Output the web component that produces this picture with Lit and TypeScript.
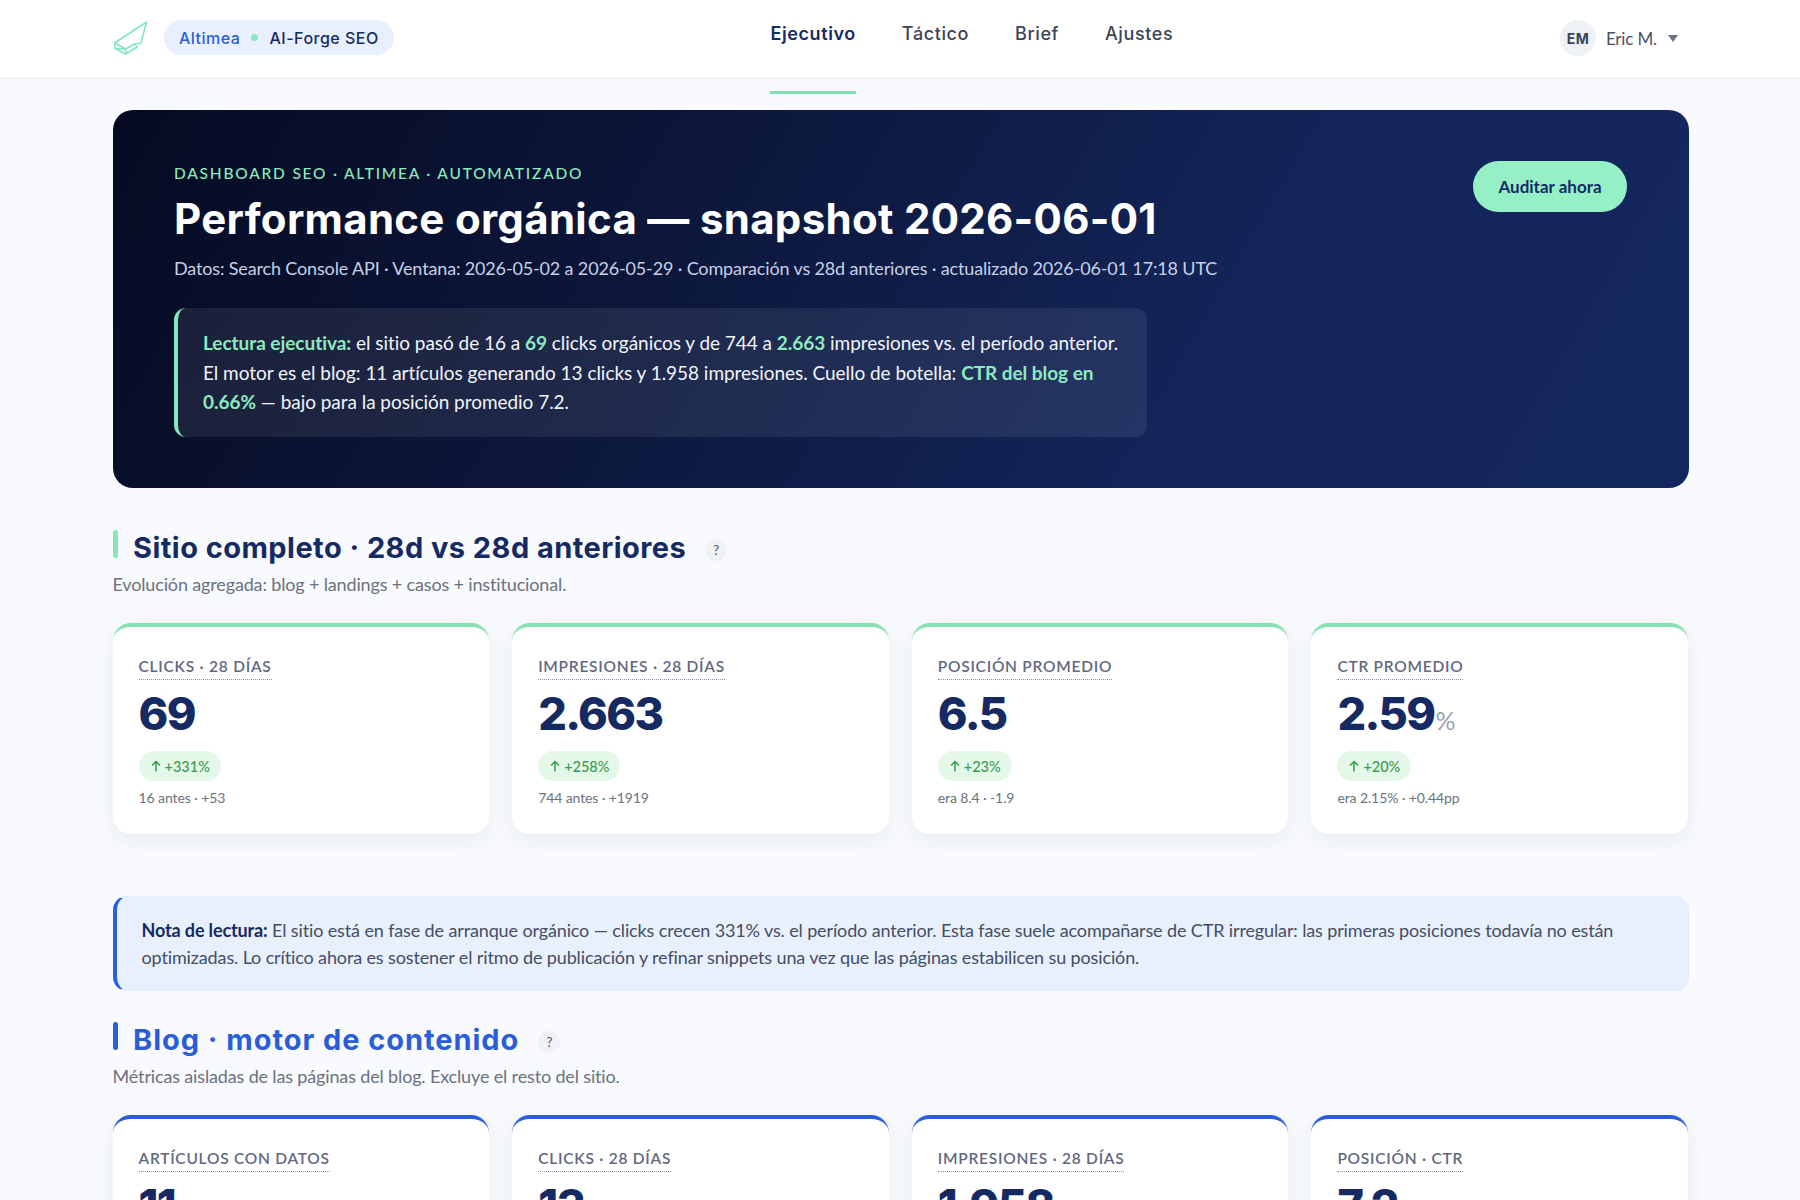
import { LitElement, html, css, nothing } from "lit";
import { customElement } from "lit/decorators.js";

interface Kpi {
  label: string;
  value: string;
  unit?: string;
  delta?: string;
  note?: string;
}

const SITE: Kpi[] = [
  { label: "CLICKS · 28 DÍAS", value: "69", delta: "+331%", note: "16 antes · +53" },
  { label: "IMPRESIONES · 28 DÍAS", value: "2.663", delta: "+258%", note: "744 antes · +1919" },
  { label: "POSICIÓN PROMEDIO", value: "6.5", delta: "+23%", note: "era 8.4 · -1.9" },
  { label: "CTR PROMEDIO", value: "2.59", unit: "%", delta: "+20%", note: "era 2.15% · +0.44pp" },
];

const BLOG: Kpi[] = [
  { label: "ARTÍCULOS CON DATOS", value: "11" },
  { label: "CLICKS · 28 DÍAS", value: "13" },
  { label: "IMPRESIONES · 28 DÍAS", value: "1.958" },
  { label: "POSICIÓN · CTR", value: "7.2" },
];

const NAV = ["Ejecutivo", "Táctico", "Brief", "Ajustes"];

@customElement("app-root")
export class AppRoot extends LitElement {
  static styles = css`
    :host {
      display: block;
      height: 100vh;
      overflow: hidden;
      background: #f8fafd;
      font-family: "Lato", sans-serif;
      color: #152a63;
    }

    /* top bar */
    .topbar {
      background: #fff;
      border-bottom: 1px solid #e6e8ec;
      height: 78px;
      box-sizing: content-box;
      padding: 0 112px 0 113px;
      display: flex;
      align-items: center;
      justify-content: space-between;
    }
    .brand {
      display: flex;
      align-items: center;
      gap: 16px;
      margin-top: -3px;
    }
    .logo {
      width: 35px;
      height: 34px;
      display: block;
    }
    .tag {
      display: flex;
      align-items: center;
      height: 35px;
      padding: 0 15px;
      border-radius: 18px;
      background: #e9f0fd;
      font-family: "Inter", sans-serif;
      font-size: 16px;
      font-weight: 500;
      letter-spacing: 0.5px;
      color: #152a63;
    }
    .tag b {
      font-weight: 500;
      color: #2a5ed8;
    }
    .tag i {
      width: 7px;
      height: 7px;
      margin: 0 11px;
      border-radius: 50%;
      background: #8be8bf;
    }
    .nav {
      display: flex;
      gap: 46px;
      margin-top: -11px;
      font-family: "Inter", sans-serif;
      font-size: 18px;
      font-weight: 500;
      letter-spacing: 0.6px;
      color: #3c4358;
    }
    .nav a {
      position: relative;
    }
    .nav a.on {
      color: #152a63;
      font-weight: 600;
    }
    .nav a.on::after {
      content: "";
      position: absolute;
      left: 0;
      right: 0;
      top: 68px;
      height: 3px;
      background: #7fe0b2;
    }
    .user {
      display: flex;
      align-items: center;
      margin-top: -2px;
      padding: 0 10px;
      font-size: 17px;
      letter-spacing: -0.15px;
      color: #4a5166;
    }
    .avatar {
      width: 36px;
      height: 36px;
      margin-right: 10px;
      border-radius: 50%;
      background: #eef1f5;
      display: flex;
      align-items: center;
      justify-content: center;
      font-family: "Inter", sans-serif;
      font-size: 14px;
      font-weight: 700;
      letter-spacing: 0.3px;
      color: #3c4358;
    }
    .caret {
      width: 0;
      height: 0;
      margin-left: 11px;
      border-left: 5px solid transparent;
      border-right: 5px solid transparent;
      border-top: 7px solid #6b7389;
    }

    main {
      padding: 31px 112px 0 112.5px;
    }

    /* hero */
    .hero {
      height: 378px;
      box-sizing: border-box;
      margin-right: -1px;
      padding: 51px 62px 51px 61.5px;
      border-radius: 20px;
      background: linear-gradient(120deg, #060b22 0%, #0c173b 36%, #13255a 70%, #14275f 100%);
      display: flex;
      justify-content: space-between;
      align-items: flex-start;
    }
    .eyebrow {
      margin-top: 2px;
      font-size: 15.5px;
      line-height: 20px;
      font-weight: 500;
      letter-spacing: 1.78px;
      color: #8ceabf;
    }
    h1 {
      margin: 10px 0 0;
      font-family: "Inter", sans-serif;
      font-size: 42px;
      line-height: 52px;
      font-weight: 700;
      letter-spacing: 0.3px;
      color: #fff;
      white-space: nowrap;
    }
    .meta {
      margin-top: 10px;
      font-size: 18px;
      line-height: 26px;
      letter-spacing: -0.15px;
      color: #c7d0e6;
      white-space: nowrap;
    }
    .insight {
      width: 973px;
      box-sizing: border-box;
      margin-top: 27px;
      padding: 20px 22px 20.5px 25px;
      border-left: 4px solid #86e6b9;
      border-radius: 12px;
      background: rgba(255, 255, 255, 0.08);
      font-size: 19px;
      line-height: 29.5px;
      letter-spacing: -0.04px;
      color: #f1f4fa;
    }
    .insight em {
      font-style: normal;
      font-weight: 700;
      color: #8ceabf;
    }
    .audit {
      height: 51px;
      width: 154px;
      border: 0;
      border-radius: 26px;
      background: #96f0c6;
      font-family: "Lato", sans-serif;
      font-size: 17px;
      font-weight: 700;
      color: #152a63;
    }

    /* sections */
    .head {
      margin-top: 42px;
    }
    .head.blog {
      margin-top: 31px;
    }
    .title {
      display: flex;
      align-items: flex-start;
    }
    .bar {
      width: 5px;
      height: 28px;
      margin-right: 15.5px;
      border-radius: 3px;
      background: #86e6b9;
    }
    .blog .bar {
      background: #2a5ed8;
    }
    h2 {
      margin: 0;
      font-family: "Inter", sans-serif;
      font-size: 29px;
      line-height: 36px;
      font-weight: 700;
      letter-spacing: 0.45px;
      color: #152a63;
    }
    .blog h2 {
      letter-spacing: 0.95px;
      color: #2a5ed8;
    }
    .hint {
      width: 22px;
      height: 22px;
      margin: 9px 0 0 19px;
      border-radius: 50%;
      background: #f0f2f5;
      display: flex;
      align-items: center;
      justify-content: center;
      font-size: 13px;
      color: #4a5166;
    }
    .sub {
      margin-top: 5px;
      font-size: 18px;
      line-height: 26px;
      letter-spacing: -0.15px;
      color: #6b7280;
    }
    .grid {
      display: grid;
      grid-template-columns: repeat(4, 1fr);
      gap: 23px;
      margin-top: 26px;
    }
    .card {
      box-sizing: border-box;
      min-height: 211px;
      padding: 29px 26px 17px;
      border-top: 4px solid #86e0b0;
      border-radius: 18px;
      background: #fff;
      box-shadow: 0 6px 22px rgba(25, 45, 95, 0.07);
    }
    .blog-cards .card {
      border-top-color: #2a5ed8;
    }
    .label {
      display: inline-block;
      padding-bottom: 3px;
      border-bottom: 1px dotted #8d94a5;
      font-size: 15.5px;
      line-height: 20px;
      font-weight: 600;
      letter-spacing: 0.75px;
      color: #5f6880;
    }
    .value {
      height: 50px;
      margin-top: 9px;
      font-family: "Inter", sans-serif;
      font-size: 45px;
      line-height: 50px;
      font-weight: 800;
      letter-spacing: -1.6px;
      color: #152a63;
    }
    .value small {
      margin-left: 1px;
      font-family: "Lato", sans-serif;
      font-size: 25px;
      line-height: 0;
      font-weight: 400;
      letter-spacing: 0;
      color: #9aa1b2;
    }
    .pill {
      display: flex;
      align-items: center;
      gap: 4px;
      width: max-content;
      height: 30px;
      margin-top: 12px;
      padding: 0 11px 0 12px;
      border-radius: 15px;
      background: #e3f8e8;
      font-size: 14.5px;
      font-weight: 500;
      color: #3a9a50;
    }
    .pill svg {
      width: 10px;
      height: 12px;
      display: block;
    }
    .was {
      margin-top: 7px;
      font-size: 14px;
      line-height: 20px;
      letter-spacing: -0.1px;
      color: #6b7280;
    }

    .note {
      box-sizing: border-box;
      height: 95px;
      margin-top: 62px;
      margin-right: -1px;
      padding: 20px 25px;
      border: 1px solid #e4ebf9;
      border-left: 4px solid #2a62dd;
      border-radius: 14px;
      background: #e9f0fd;
      font-size: 18px;
      line-height: 27px;
      letter-spacing: -0.13px;
      color: #444e64;
    }
    .note strong {
      font-weight: 700;
      color: #152a63;
    }
  `;

  private kpi(k: Kpi) {
    return html`
      <div class="card">
        <div class="label">${k.label}</div>
        <div class="value">${k.value}${k.unit ? html`<small>${k.unit}</small>` : nothing}</div>
        ${k.delta
          ? html`<div class="pill">
              <svg viewBox="0 0 10 12" fill="none" stroke="currentColor" stroke-width="1.5">
                <path d="M5 11.5V1.5M1 5.5l4-4 4 4" />
              </svg>
              ${k.delta}
            </div>`
          : nothing}
        ${k.note ? html`<div class="was">${k.note}</div>` : nothing}
      </div>
    `;
  }

  render() {
    return html`
      <header class="topbar">
        <div class="brand">
          <svg class="logo" viewBox="0 0 35 34" fill="none" stroke="#7fe6bd" stroke-width="1.5" stroke-linejoin="round">
            <path d="M33.5 1 1.5 22 2 27.5 12.7 33 24.3 26 21.3 23 28 22.3Z" />
            <path d="M1.5 22 12.7 28 21.3 23M2 27.5 12.7 28 12.7 33" />
          </svg>
          <div class="tag"><b>Altimea</b><i></i>AI-Forge SEO</div>
        </div>
        <nav class="nav">
          ${NAV.map((n, i) => html`<a class=${i === 0 ? "on" : ""}>${n}</a>`)}
        </nav>
        <div class="user">
          <div class="avatar">EM</div>
          Eric M.
          <span class="caret"></span>
        </div>
      </header>

      <main>
        <section class="hero">
          <div>
            <div class="eyebrow">DASHBOARD SEO · ALTIMEA · AUTOMATIZADO</div>
            <h1>Performance orgánica — snapshot 2026-06-01</h1>
            <div class="meta">
              Datos: Search Console API · Ventana: 2026-05-02 a 2026-05-29 · Comparación vs 28d anteriores · actualizado 2026-06-01 17:18 UTC
            </div>
            <div class="insight">
              <em>Lectura ejecutiva:</em> el sitio pasó de 16 a <em>69</em> clicks orgánicos y de 744 a
              <em>2.663</em> impresiones vs. el período anterior. El motor es el blog: 11 artículos generando 13
              clicks y 1.958 impresiones. Cuello de botella: <em>CTR del blog en 0.66%</em> — bajo para la posición
              promedio 7.2.
            </div>
          </div>
          <button class="audit">Auditar ahora</button>
        </section>

        <div class="head">
          <div class="title">
            <span class="bar"></span>
            <h2>Sitio completo · 28d vs 28d anteriores</h2>
            <span class="hint">?</span>
          </div>
          <div class="sub">Evolución agregada: blog + landings + casos + institucional.</div>
        </div>
        <div class="grid">${SITE.map((k) => this.kpi(k))}</div>

        <div class="note">
          <strong>Nota de lectura:</strong> El sitio está en fase de arranque orgánico — clicks crecen 331% vs. el
          período anterior. Esta fase suele acompañarse de CTR irregular: las primeras posiciones todavía no están
          optimizadas. Lo crítico ahora es sostener el ritmo de publicación y refinar snippets una vez que las páginas
          estabilicen su posición.
        </div>

        <div class="head blog">
          <div class="title">
            <span class="bar"></span>
            <h2>Blog · motor de contenido</h2>
            <span class="hint">?</span>
          </div>
          <div class="sub">Métricas aisladas de las páginas del blog. Excluye el resto del sitio.</div>
        </div>
        <div class="grid blog-cards">${BLOG.map((k) => this.kpi(k))}</div>
      </main>
    `;
  }
}
